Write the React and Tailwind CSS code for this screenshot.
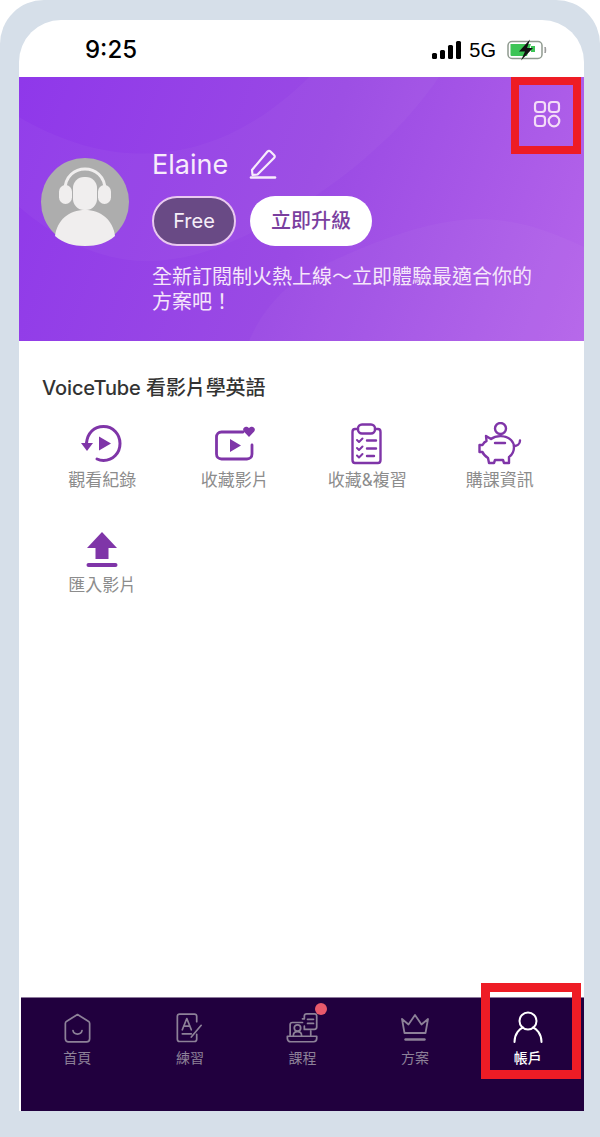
const FONT = "font-['Inter','Noto_Sans_CJK_TC',sans-serif]";

const HistoryIcon = () => (
  <svg width="44" height="44" viewBox="0 0 44 44" fill="none" stroke="#7f35a8" strokeWidth="3" strokeLinecap="round">
    <path d="M6.500 21C7.500 11 14 4.500 23.500 4.500C33 4.500 40 12 40 21.500C40 31 33 38.500 23.500 38.500C21 38.500 19 38 17 37" />
    <path d="M1 21H13L7 29Z" fill="#7f35a8" stroke="none" />
    <path d="M19 14.500L31 21.500L19 28.500Z" fill="#7f35a8" stroke="none" />
  </svg>
);

const FavVideoIcon = () => (
  <svg width="44" height="44" viewBox="0 0 44 44" fill="none" stroke="#7f35a8" strokeWidth="2.800" strokeLinecap="round">
    <path d="M30 10H8.500C5.500 10 3.500 12 3.500 15V32C3.500 35 5.500 37 8.500 37H34C37 37 39 35 39 32V23" />
    <path d="M17 17L28 23.500L17 30Z" fill="#7f35a8" stroke="none" />
    <path d="M36 15L30.800 9.500C28.500 6.500 32.500 2.500 36 6C39.500 2.500 43.500 6.500 41.200 9.500Z" fill="#7f35a8" stroke="none" />
  </svg>
);

const ClipboardIcon = () => (
  <svg width="44" height="44" viewBox="0 0 44 44" fill="none" stroke="#7f35a8" strokeWidth="2.400" strokeLinecap="round" strokeLinejoin="round">
    <path d="M13 7H10C8 7 7.500 8.500 7.500 10V38C7.500 40 8.500 41 10 41H33C35 41 35.500 40 35.500 38V10C35.500 8.500 35 7 33 7H30" />
    <rect x="13" y="2.500" width="17" height="9" rx="4" />
    <path d="M12 18L14 20L17.500 16.500M12 26L14 28L17.500 24.500M12 33.500L14 35.500L17.500 32" strokeWidth="2" />
    <path d="M22 18.500H31M22 26.500H31M22 34H29" />
  </svg>
);

const PiggyIcon = () => (
  <svg width="44" height="44" viewBox="0 0 44 44" fill="none" stroke="#7f35a8" strokeWidth="2.400" strokeLinecap="round" strokeLinejoin="round">
    <circle cx="22.500" cy="6.500" r="5.500" />
    <path d="M8 14L13 17C18 13 28 13 33 18C35 20 36 23 36 25C36 30 34 33 31 35V41H26L25 38H17L16 41H11L10 36C7 34 5.500 33 4.500 30H1.500V23H4.500C5.500 21 7 19.500 8.500 19Z" />
    <path d="M36 24C39 24 42 22 42 18.500" />
    <path d="M17 21H27" />
  </svg>
);

const UploadIcon = () => (
  <svg width="44" height="44" viewBox="0 0 44 44">
    <path d="M22 5L37 21H28.500V32H15.500V21H7Z" fill="#7f35a8" />
    <rect x="6.500" y="36" width="31" height="4" rx="2" fill="#7f35a8" />
  </svg>
);

const HomeIcon = () => (
  <svg width="27" height="32" viewBox="0 0 30 34" fill="none" stroke="#8d8198" strokeWidth="1.900" strokeLinecap="round" strokeLinejoin="round">
    <path d="M15 2L27 9.500C28 10 28.500 11 28.500 12V29C28.500 31 27 32.500 25 32.500H5C3 32.500 1.500 31 1.500 29V12C1.500 11 2 10 3 9.500Z" />
    <path d="M10 20C11 25 19 25 20 20" />
  </svg>
);

const PracticeIcon = () => (
  <svg width="27" height="32" viewBox="0 0 30 34" fill="none" stroke="#8d8198" strokeWidth="1.900" strokeLinecap="round" strokeLinejoin="round">
    <path d="M23 10V4C23 2.500 22 1.500 20.500 1.500H4C2.500 1.500 1.500 2.500 1.500 4V29.500C1.500 31 2.500 32 4 32H20.500C22 32 23 31 23 29.500V24" />
    <path d="M7 19L12 6.500L17 19M8.500 15H15.500M7 23.500H17" />
    <path d="M17 27L28 14" />
  </svg>
);

const CourseIcon = () => (
  <svg width="33" height="32" viewBox="0 0 36 34" fill="none" stroke="#8d8198" strokeWidth="1.900" strokeLinecap="round" strokeLinejoin="round">
    <path d="M18 11H7C5.500 11 4.500 12 4.500 13.500V25M27 20V25" />
    <path d="M1.500 26H33.500V28.500C33.500 30.500 32 32 30 32H5C3 32 1.500 30.500 1.500 28.500Z" />
    <circle cx="12.500" cy="17" r="3.500" />
    <path d="M8 25.500C8 19.500 17 19.500 17 25.500" />
    <path d="M18 7H20V4C20 2.500 21 1.500 22.500 1.500H31C32.500 1.500 33.500 2.500 33.500 4V16C33.500 17.500 32.500 18.500 31 18.500H20V15" />
    <path d="M23.500 7.500H30M23.500 12H30" />
  </svg>
);

const CrownIcon = () => (
  <svg width="30" height="30" viewBox="0 0 30 30" fill="none" stroke="#8d8198" strokeWidth="1.800" strokeLinecap="round" strokeLinejoin="round">
    <path d="M2 6L8.500 11.500L15 2L21.500 11.500L28 6L25.500 20H4.500Z" />
    <path d="M5.500 26.500H24.500" strokeWidth="2.400" />
  </svg>
);

const UserIcon = () => (
  <svg width="32" height="34" viewBox="0 0 32 34" fill="none" stroke="#ffffff" strokeWidth="2" strokeLinecap="round">
    <circle cx="16" cy="10" r="8.500" />
    <path d="M2.500 31C2.500 22.500 8 17.500 11 16.500M29.500 31C29.500 22.500 24 17.500 21 16.500" />
  </svg>
);

const AppsIcon = () => (
  <svg width="28" height="28" viewBox="0 0 28 28" fill="none" stroke="#f3dcf7" strokeWidth="2.200">
    <rect x="2" y="2" width="10" height="10" rx="3" />
    <rect x="16" y="2" width="10" height="10" rx="3" />
    <rect x="2" y="16" width="10" height="10" rx="3" />
    <circle cx="21" cy="21" r="5.300" />
  </svg>
);

const EditIcon = () => (
  <svg width="28" height="30" viewBox="0 0 28 30" fill="none" stroke="#f7ecfb" strokeWidth="2.200" strokeLinecap="round" strokeLinejoin="round">
    <path d="M3 21L3.500 26L8.500 25.500L25 9C26 8 26 7 25 6L21.500 2.500C20.500 1.500 19.500 1.500 18.500 2.500Z" />
    <path d="M2 28.500H26" strokeWidth="2.600" />
  </svg>
);

const Avatar = () => (
  <svg width="88" height="88" viewBox="0 0 88 88">
    <circle cx="44" cy="44" r="44" fill="#adadad" />
    <path d="M24 32C24 4 64 4 64 32" fill="none" stroke="#f0eeee" strokeWidth="3" />
    <rect x="18" y="27" width="13" height="19" rx="6.500" fill="#f0eeee" />
    <rect x="57" y="27" width="13" height="19" rx="6.500" fill="#f0eeee" />
    <rect x="32" y="19" width="24" height="33" rx="11" fill="#f0eeee" />
    <path d="M14 78C16 62 28 52 44 52C60 52 72 62 74 78C66 85 56 88 44 88C32 88 22 85 14 78Z" fill="#f0eeee" />
  </svg>
);

const StatusIcons = () => (
  <div className="flex items-center gap-[8px]">
    <div className="flex items-end gap-[3px] h-[18px]">
      <div className="w-[5px] h-[6px] bg-black rounded-[1.500px]" />
      <div className="w-[5px] h-[9px] bg-black rounded-[1.500px]" />
      <div className="w-[5px] h-[14px] bg-black rounded-[1.500px]" />
      <div className="w-[5px] h-[18px] bg-black rounded-[1.500px]" />
    </div>
    <span className="text-[20px] leading-none text-black font-['Liberation_Sans',sans-serif]">5G</span>
    <svg className="ml-[3px]" width="40" height="22" viewBox="0 0 40 22">
      <rect x="1" y="2.500" width="34" height="17" rx="4" fill="none" stroke="#8f9a8f" strokeWidth="1.500" />
      <path d="M3.500 5H24L20 17H5C4 17 3.500 16.500 3.500 16Z" fill="#3cc455" />
      <rect x="24" y="7" width="4" height="6" fill="#3cc455" />
      <path d="M38 8C39 9 39 13 38 14Z" fill="#9a9a9a" stroke="#9a9a9a" />
      <path d="M23 0.500L12 12.500H18L14 21.500L26 9H20Z" fill="#111" />
    </svg>
  </div>
);

const menu = [
  { label: "觀看紀錄", icon: <HistoryIcon /> },
  { label: "收藏影片", icon: <FavVideoIcon /> },
  { label: "收藏&複習", icon: <ClipboardIcon /> },
  { label: "購課資訊", icon: <PiggyIcon /> },
  { label: "匯入影片", icon: <UploadIcon /> },
];

const tabs = [
  { label: "首頁", icon: <HomeIcon /> },
  { label: "練習", icon: <PracticeIcon /> },
  { label: "課程", icon: <CourseIcon />, dot: true },
  { label: "方案", icon: <CrownIcon /> },
  { label: "帳戶", icon: <UserIcon />, active: true },
];

const App = () => {
  return (
    <div className={`relative w-[600px] h-[1137px] bg-white overflow-hidden ${FONT}`}>
      <div className="w-full h-full bg-[#d6dfe9] rounded-t-[44px] pt-[20px] pl-[19px] pr-[16px] pb-[26px]">
        <div className="h-full flex flex-col bg-white rounded-t-[42px] overflow-hidden">
          {/* status bar */}
          <div className="h-[57px] shrink-0 flex items-center justify-between pl-[66px] pr-[37px] pt-[3px]">
            <span className="text-[24px] leading-none font-medium text-black">9:25</span>
            <StatusIcons />
          </div>

          {/* purple header */}
          <div className="relative h-[264px] shrink-0 overflow-hidden bg-[linear-gradient(110deg,#8f38ea_0%,#9a4ae4_50%,#b565ea_100%)]">
            <svg className="absolute inset-0" width="565" height="264" viewBox="0 0 565 264">
              <path d="M0 40C120 110 220 70 290 0H420C380 60 300 130 200 170C120 200 60 180 0 130Z" fill="#ffffff" opacity="0.03" />
              <path d="M565 0V170C480 130 430 130 300 190C260 210 240 240 230 264H565Z" fill="#ffffff" opacity="0.03" />
            </svg>
            <div className="relative flex flex-col">
              <div className="flex justify-end pt-[23px] pr-[23px]">
                <AppsIcon />
              </div>
              <div className="flex pl-[22px] pt-[15px]">
                <div className="pt-[15px]">
                  <Avatar />
                </div>
                <div className="ml-[23px] flex flex-col items-start">
                  <div className="flex items-center gap-[21px] h-[42px]">
                    <span className="text-[27px] leading-none text-[#f7ecfb]">Elaine</span>
                    <EditIcon />
                  </div>
                  <div className="flex items-center gap-[14px] mt-[11px]">
                    <div className="w-[84px] h-[50px] rounded-full bg-[#694a85] border-2 border-[#e9c9ef] flex items-center justify-center text-[20px] text-[#f5eef8]">
                      Free
                    </div>
                    <div className="w-[122px] h-[50px] rounded-full bg-white flex items-center justify-center text-[20px] font-medium text-[#7a3f9f]">
                      立即升級
                    </div>
                  </div>
                  <p className="w-[385px] mt-[19px] text-[20px] leading-[25px] text-[#f5e6fa]">
                    全新訂閱制火熱上線～立即體驗最適合你的方案吧！
                  </p>
                </div>
              </div>
            </div>
          </div>

          {/* menu */}
          <div className="flex-1 pt-[34px]">
            <h2 className="pl-[23px] text-[20px] leading-[26px] font-medium tracking-[-0.1px] text-[#333333]">VoiceTube 看影片學英語</h2>
            <div className="grid grid-cols-4 gap-y-[36px] w-[530px] ml-[17px] mt-[21px]">
              {menu.map((item) => (
                <div key={item.label} className="flex flex-col items-center">
                  {item.icon}
                  <span className="mt-[3px] text-[17px] leading-[22px] text-[#8c8c8c]">{item.label}</span>
                </div>
              ))}
            </div>
          </div>

          {/* bottom tabs */}
          <div className="h-[114px] shrink-0 ml-[2px] bg-[#21003e] border-t border-[#8d7a9c] grid grid-cols-5">
            {tabs.map((tab) => (
              <div key={tab.label} className="relative flex flex-col items-center pt-[12px]">
                <div className="h-[36px] flex items-center justify-center">{tab.icon}</div>
                <span className={`mt-[2px] text-[14px] leading-[20px] ${tab.active ? "text-white font-medium" : "text-[#8d8198]"}`}>
                  {tab.label}
                </span>
                {tab.dot && <div className="absolute top-[5px] left-[69px] w-[12px] h-[12px] rounded-full bg-[#e8596b]" />}
              </div>
            ))}
          </div>
        </div>
      </div>

      {/* red highlight boxes drawn over the screenshot */}
      <div className="absolute left-[511px] top-[77px] w-[70px] h-[77px] border-[8px] border-[#ee1c25]" />
      <div className="absolute left-[481px] top-[983px] w-[100px] h-[96px] border-[9px] border-[#ee1c25]" />
    </div>
  );
};

export default App;
